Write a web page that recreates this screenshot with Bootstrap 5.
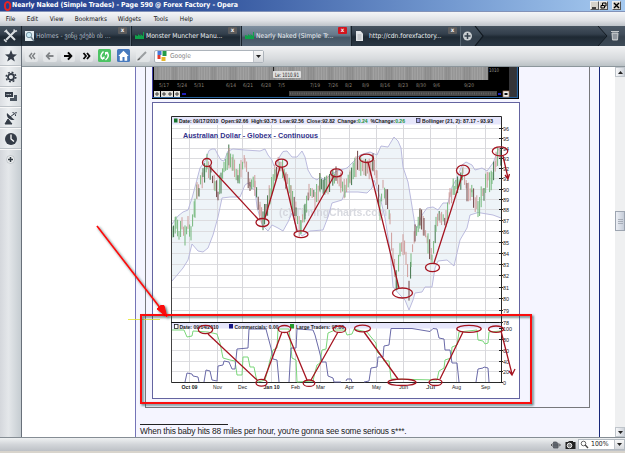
<!DOCTYPE html>
<html lang="en">
<head>
<meta charset="utf-8">
<title>Nearly Naked (Simple Trades) - Opera</title>
<link href="https://cdn.jsdelivr.net/npm/bootstrap@5.3.0/dist/css/bootstrap.min.css" rel="stylesheet">
<style>
html,body{width:625px;height:453px;overflow:hidden}
body{font-family:"DejaVu Sans Condensed","DejaVu Sans",sans-serif;font-size:6.8px;line-height:1;color:#222;background:#d8d4cc}
svg{display:block;flex:none}
.titlebar{height:12px;background:linear-gradient(90deg,#27408f,#3658a0 35%,#7399d0 72%,#a6caf0);color:#fff;font-weight:700;padding-left:3px;border-bottom:1px solid #8292b8}
.titlebar span{font-size:6.9px;letter-spacing:-.05px;white-space:nowrap}
.winbtn{width:9px;height:9px;background:#d6d2c9;border:1px solid #eee;border-right-color:#555;border-bottom-color:#555}
.menubar{height:14px;background:linear-gradient(#f4f5f7,#dfe1e5 60%,#bfc4ca);color:#111}
.menubar span{flex:none;white-space:nowrap;font-size:6.4px}
.tabstrip{height:20px;background:linear-gradient(#46535f,#333f4c 40%,#1e2933 55%,#2b3844);color:#eef2f5}
.cell{height:20px}
.page-tab{width:110px;border-left:1px solid #18222b;border-right:1px solid #566470;padding-left:2px}
.page-tab .caption{font-size:6.7px;white-space:nowrap;margin-left:1px;padding-top:1px}
.page-tab.current{background:linear-gradient(#8090a0,#66788a 45%,#455564 58%,#536474)}
.close-x{width:9px;height:7px;background:#5b5b5c;color:#eee;font-size:6px;font-weight:700;line-height:6px;text-align:center;position:absolute;right:3px;top:1px;border-radius:1px}
.current .close-x{background:#d3141d}
.panelbar{width:22px;background:linear-gradient(90deg,#d4d7dc,#e4e7ea 40%,#c5ccd1);border-right:1px solid #68707a}
.panelbtn{height:20.8px;background:linear-gradient(90deg,#dcdfe3,#edf0f2 40%,#d5dadd);border-bottom:1px solid #f8f8f8;box-shadow:inset 0 -1px #bcc2c7}
.toolbar-nav{height:21px;background:linear-gradient(#f1f2f3,#d7dadd 65%,#bbc2c6);border-bottom:1px solid #8c969c}
.search{width:110px;height:13px;background:#fff;border:1px solid #adb4bb;color:#858585;font-size:6.6px;border-radius:2px}
.dropbtn{width:10px;background:linear-gradient(#f7f7f7,#d5d8dc);border-left:1px solid #c0c4ca}
.gutter{width:113px;background:#fff}
.post{width:465px;background:#f5f5ff;border-left:1px solid #7474b7;border-right:1px solid #182779}
.shot{width:445px;height:341px;border:1px solid #77787c;border-top:0;padding-left:6px;margin-left:9px}
.chartbox{width:368px;height:297px;background:#fff;border:1px solid #6464a0;margin-top:3px}
.sig{margin:15.5px 0 0 4px;color:#222;font-family:"Liberation Sans",sans-serif;font-size:8.4px;letter-spacing:-.17px;white-space:nowrap}
.sig hr{width:88px;margin:0 0 2px;border-top:1px solid #222;opacity:1}
.scroller{width:10px;background:#eff0f1}
.scrollbtn{height:10px;background:linear-gradient(90deg,#f6f7f9,#ced3da);border:1px solid #bfc5cb}
.thumb{height:20px;background:linear-gradient(90deg,#eceff5,#c5ccd8);border:1px solid #9da5b1;margin-top:134px}
.statusbar{height:14px;background:linear-gradient(#eff1f2,#d2d5d9 50%,#bdc1c6);border-top:1px solid #858d94}
.zoombox{width:47px;height:11px;background:#fff;border:1px solid #b3bac1}
.overlay{left:0;top:0;pointer-events:none}
</style>
<script src="https://cdn.jsdelivr.net/npm/bootstrap@5.3.0/dist/js/bootstrap.bundle.min.js"></script>
</head>
<body class="d-flex flex-column position-relative">
<header class="titlebar d-flex align-items-center flex-shrink-0">
  <svg width="9" height="10" viewBox="0 0 9 10"><ellipse cx="4.6" cy="5" rx="2.7" ry="4" fill="none" stroke="#e52525" stroke-width="2"/></svg>
  <span>Nearly Naked (Simple Trades) - Page 590 @ Forex Factory - Opera</span>
  <div class="d-flex ms-auto me-1">
    <div class="winbtn"><svg width="7" height="7"><path d="M1 6H5" stroke="#000" stroke-width="1.4"/></svg></div>
    <div class="winbtn ms-0"><svg width="7" height="7"><path d="M2.5 3V1H6V4H5M1 3.5H4.5V6H1Z" fill="none" stroke="#000"/></svg></div>
    <div class="winbtn ms-1"><svg width="7" height="7"><path d="M1 1L6 6M6 1L1 6" stroke="#000" stroke-width="1.4"/></svg></div>
  </div>
</header>
<nav class="menubar flex-shrink-0 d-flex align-items-center ps-1">
  <span style="width:21px">&nbsp;File</span><span style="width:23px">&nbsp;Edit</span><span style="width:25px">&nbsp;View</span><span style="width:43px">&nbsp;Bookmarks</span><span style="width:36px">&nbsp;Widgets</span><span style="width:26px">&nbsp;Tools</span><span>&nbsp;Help</span>
</nav>
<div class="tabstrip flex-shrink-0 d-flex">
  <div class="cell"><svg width="21" height="20" viewBox="0 0 21 20"><path d="M6 5L15 14M15 5L6 14" stroke="#d9dee1" stroke-width="2"/><path d="M4.500 6L7 3.800M13.600 3.500L15.200 5.400L17 4.800M4 13.500L6.500 16" stroke="#d9dee1" stroke-width="1.500" fill="none"/></svg></div>
  <div class="cell page-tab d-flex align-items-center position-relative"><svg width="11" height="12" viewBox="0 0 11 12"><path d="M1 1H10V11H1Z" fill="#e1ebef"/><circle cx="5" cy="5" r="2.7" fill="#c6e7f2" stroke="#7894a3"/><path d="M7 7L10 11" stroke="#6b7e8a" stroke-width="1.4"/></svg><span class="caption" style="color:#aebac5">Holmes - ვინც ეძებს ის ...</span><i class="close-x fst-normal">x</i></div>
  <div class="cell page-tab d-flex align-items-center position-relative"><svg width="11" height="12" viewBox="0 0 11 12"><path d="M1 9V5L4 6V4L6.5 6V4L9 6V2H10V9Z" fill="#10a04a"/></svg><span class="caption">Monster Muncher Manu...</span><i class="close-x fst-normal">x</i></div>
  <div class="cell page-tab current d-flex align-items-center position-relative"><svg width="11" height="12" viewBox="0 0 11 12"><path d="M1 9V5L4 6V4L6.5 6V4L9 6V2H10V9Z" fill="#10a04a"/></svg><span class="caption">Nearly Naked (Simple Tr...</span><i class="close-x fst-normal">x</i></div>
  <div class="cell page-tab d-flex align-items-center position-relative"><svg width="11" height="12" viewBox="0 0 11 12"><path d="M2 1H6.5L9 3.5V11H2Z" fill="#e1e4e7"/><path d="M3.5 5H7.5M3.5 7H7.5M3.5 9H7.5" stroke="#a0a5ad" stroke-width=".8"/></svg><span class="caption ms-1">http://cdn.forexfactory...</span><i class="close-x fst-normal">x</i></div>
  <svg width="24" height="20" viewBox="0 0 24 20"><path d="M14 0L22 10L14 20H0V0Z" fill="#445260" opacity=".5"/><path d="M14 0L22 10L14 20" fill="none" stroke="#10181f" stroke-width="1.2"/><circle cx="6.5" cy="10" r="4.5" fill="#c9ced1"/><path d="M6.5 7V13M3.5 10H9.5" stroke="#35414d" stroke-width="1.5"/></svg>
  <svg class="ms-auto" width="28" height="20" viewBox="0 0 28 20"><path d="M1 0L10 10L1 20H28V0Z" fill="#54616e" opacity=".45"/><path d="M1 0L10 10L1 20" fill="none" stroke="#131b22"/><path d="M14 5.5H22M15 7H21L20.5 14H15.500Z" fill="#aeb4b8" stroke="#c5c9cb"/><path d="M17 8V13M19 8V13" stroke="#5b6670" stroke-width=".7"/></svg>
</div>
<div class="d-flex flex-shrink-0" style="height:391px">
  <aside class="panelbar flex-shrink-0">
    <div class="panelbtn d-flex align-items-center justify-content-center"><svg width="14" height="14" viewBox="0 0 14 14"><path d="M7 1L8.700 5.200L13 5.400L9.600 8.200L10.800 12.600L7 10L3.200 12.600L4.400 8.200L1 5.400L5.300 5.200Z" fill="#343c47"/></svg></div>
    <div class="panelbtn d-flex align-items-center justify-content-center"><svg width="14" height="14" viewBox="0 0 14 14"><circle cx="7" cy="7" r="4.800" fill="none" stroke="#343c47" stroke-width="1.500" stroke-dasharray="1.900 1.870"/><circle cx="7" cy="7" r="3" fill="none" stroke="#343c47" stroke-width="1.900"/></svg></div>
    <div class="panelbtn d-flex align-items-center justify-content-center"><svg width="14" height="14" viewBox="0 0 14 14"><path d="M1 2H9V7H4L3 8V7H1Z" fill="#343c47"/><path d="M10 5H13V11H6V8H10Z" fill="#4c5661"/><path d="M2.500 4.500H7.500" stroke="#c5cad0" stroke-dasharray="1.200 .5"/></svg></div>
    <div class="panelbtn d-flex align-items-center justify-content-center"><svg width="14" height="14" viewBox="0 0 14 14"><path d="M3 2C2 6 5 9.500 10.500 9Z" fill="#343c47"/><path d="M1 13L4 8L8 13ZM6 6L10 3" stroke="#343c47" fill="#343c47"/><path d="M8.500 1.500Q11.500 1.500 11.700 5" fill="none" stroke="#343c47"/><circle cx="12" cy="1.700" r=".8" fill="#343c47"/></svg></div>
    <div class="panelbtn d-flex align-items-center justify-content-center"><svg width="14" height="14" viewBox="0 0 14 14"><circle cx="7" cy="7" r="6" fill="#343c47"/><path d="M7 2.500V7L10 9.500" fill="none" stroke="#fff" stroke-width="1.300"/></svg></div>
    <div class="d-flex justify-content-center pt-1"><svg width="11" height="11" viewBox="0 0 11 11"><circle cx="5.500" cy="5.500" r="4" fill="#eef0f1" stroke="#b3b9be" stroke-width=".7"/><path d="M5.500 3V8M3 5.500H8" stroke="#333b43" stroke-width="1.500"/></svg></div>
  </aside>
  <main class="flex-grow-1">
    <div class="toolbar-nav d-flex align-items-center">
      <svg width="128" height="20" viewBox="22 46 128 20"><g fill="#e9ebed" opacity=".7"><rect x="25" y="49" width="13" height="13" rx="2"/><rect x="43" y="49" width="14" height="13" rx="2"/><rect x="61" y="49" width="14" height="13" rx="2"/><rect x="80" y="49" width="13" height="13" rx="2"/><rect x="136" y="49" width="14" height="13" rx="2"/></g><path d="M32 53L29.500 56L32 59M35 53L32.500 56L35 59" fill="none" stroke="#7d8083" stroke-width="1.400"/><path d="M46 56H53.500M49.800 52.600L46.700 56L49.800 59.400" fill="none" stroke="#818487" stroke-width="1.800"/><path d="M64 56H71M68 52.300L71.300 56L68 59.700" fill="none" stroke="#050505" stroke-width="2"/><path d="M83.500 53L86 56L83.500 59M87 53L89.500 56L87 59" fill="none" stroke="#080808" stroke-width="1.800"/><rect x="98" y="49" width="13" height="13" rx="1.500" fill="#4cc363"/><path d="M103.500 51.500Q98.500 56 103 59.500M105.500 60Q110.500 56 106.500 52" fill="none" stroke="#fff" stroke-width="1.500"/><path d="M100.500 59H104.500V56ZM108.500 52H105V55.500Z" fill="#fff"/><rect x="117" y="49" width="13" height="13" rx="1.500" fill="#4679bd"/><path d="M118.300 56L123.500 50.800L128.700 56H127.200V60.800H119.800V56Z" fill="#fff"/><rect x="122.500" y="57" width="2" height="4" fill="#4679bd"/><path d="M138 60L146 52" stroke="#9b9ea1" stroke-width="2"/><path d="M137.500 60L140 58.500" stroke="#555"/></svg>
      <div class="search d-flex align-items-center ms-1"><svg width="15" height="12" viewBox="0 0 14 12"><path d="M2 1H6V5H2Z" fill="#4779d9"/><path d="M2 5H5V9H2Z" fill="#de3a2f"/><path d="M7 1H11V6H7Z" fill="#239b4a"/><path d="M6 7H10V11H6Z" fill="#e6b72a"/></svg><span>Google</span><span class="dropbtn ms-auto h-100 d-flex align-items-center justify-content-center"><svg width="5" height="3"><path d="M0 0H5L2.500 3Z" fill="#222"/></svg></span></div>
    </div>
    <div class="d-flex" style="height:370px">
      <div class="gutter flex-shrink-0"></div>
      <section class="post flex-shrink-0">
        <div class="shot">
          <svg id="terminal" width="367" height="32" viewBox="153 67 367 32"></svg>
          <div class="chartbox"><svg id="chart" width="366" height="295" viewBox="153 103 366 295"></svg></div>
        </div>
        <div class="sig"><hr>When this baby hits 88 miles per hour, you're gonna see some serious s***.</div>
      </section>
      <div class="flex-grow-1 bg-white"></div>
      <div class="scroller flex-shrink-0 d-flex flex-column">
        <div class="scrollbtn d-flex align-items-center justify-content-center"><svg width="5" height="3"><path d="M0 3H5L2.500 0Z" fill="#222"/></svg></div>
        <div class="thumb d-flex align-items-center justify-content-center"><svg width="5" height="5"><path d="M0 .5H5M0 2.500H5M0 4.500H5" stroke="#929aa5" stroke-width=".7"/></svg></div>
        <div class="scrollbtn mt-auto d-flex align-items-center justify-content-center"><svg width="5" height="3"><path d="M0 0H5L2.500 3Z" fill="#222"/></svg></div>
      </div>
    </div>
  </main>
</div>
<footer class="statusbar flex-shrink-0 d-flex align-items-center justify-content-end">
  <svg width="27" height="12" viewBox="0 0 27 12"><path d="M0 6H9M2.500 3H5.500L7 4.500V9H2.500Z" fill="#60666e" stroke="#50565e" stroke-width=".8"/><path d="M1.500 4.500L0 6L1.500 7.500M8 4.500L9.500 6L8 7.500" fill="none" stroke="#444" stroke-width=".8"/><path d="M14.500 3H17L18 2H22V3H24.500V10H14.500Z" fill="#222"/><circle cx="18.500" cy="6.500" r="2.300" fill="#888" stroke="#eee"/></svg>
  <div class="zoombox d-flex align-items-center me-0"><svg width="12" height="9" viewBox="0 0 12 9"><circle cx="4.500" cy="3.500" r="2.300" fill="none" stroke="#666"/><path d="M6.200 5L9 8" stroke="#444" stroke-width="1.300"/></svg><span>100%</span><span class="dropbtn ms-auto h-100 d-flex align-items-center justify-content-center"><svg width="5" height="3"><path d="M0 0H5L2.500 3Z" fill="#222"/></svg></span></div>
</footer>
<svg class="overlay position-absolute" width="625" height="453" viewBox="0 0 625 453">
  <defs><filter id="shade" x="-10%" y="-10%" width="125%" height="125%"><feDropShadow dx="1.500" dy="1.500" stdDeviation="1.200" flood-color="#214f4f" flood-opacity=".8"/></filter></defs>
  <path d="M128 319.500H160" stroke="#e6e622" opacity=".8" stroke-width="1"/>
  <g filter="url(#shade)"><rect x="141" y="315" width="390" height="88" fill="none" stroke="#fb0707" stroke-width="2"/><path d="M97 226L161 309" stroke="#fa0707" stroke-width="1.700"/><path d="M167 317L157 309L160.500 305.500L164 305.500Z" fill="#fa0707" stroke="#fa0707"/></g>
</svg>
<script>
const txt=(x,y,s,fill,size,w,extra='')=>`<text x="${x}" y="${y}" fill="${fill}" font-size="${size}" ${w?`textLength="${w}" lengthAdjust="spacingAndGlyphs"`:''} ${extra}>${s}</text>`;
const poly=(pts,c,w=1,f='none')=>`<polyline points="${pts}" fill="${f}" stroke="${c}" stroke-width="${w}"/>`;
// trading terminal strip
let t='<rect x="153" y="67" width="367" height="32" fill="#000"/><rect x="155" y="67" width="334" height="13" fill="#959595"/>';
for(let x=156;x<489;x+=2.6)t+=`<path d="M${x} 67V80" stroke="${Math.round(x)%3?'#a8a8a8':'#888'}" stroke-width=".8"/>`;
[[160,'5/17'],[178,'5/24'],[195,'5/31'],[227,'6/14'],[244,'6/21'],[262,'6/28'],[279,'7/5'],[311,'7/19'],[329,'7/26'],[346,'8/2'],[363,'8/9'],[381,'8/16'],[399,'8/23'],[417,'8/30'],[434,'9/6'],[465,'9/20']].forEach(a=>t+=txt(a[0],86.5,a[1],'#8a8378',5,a[1].length>3?10:7));
t+=txt(490,71.5,'1010','#999',5,10)+'<rect x="510" y="67" width="8" height="31" fill="#353538"/><path d="M154 97.500H518.500V67" fill="none" stroke="#28629c" stroke-width="1.200"/><path d="M153.500 67V98" stroke="#4141a5"/><rect x="290" y="91" width="208" height="5" fill="#464646"/><path d="M291 93.500H498" stroke="#666" stroke-width="2" stroke-dasharray="1 1.300"/>';
[155,162,168,175].forEach(x=>t+=`<rect x="${x}" y="91" width="6" height="6" fill="#e3e3dc"/><path d="M${x+1} 94H${x+5}M${x+3} 92V96" stroke="#333" stroke-width=".9"/>`);
t+='<path d="M183 94H187M499 94H502" stroke="#2222bb" stroke-width="2"/><rect x="504" y="91" width="6" height="6" fill="#eee" stroke="#a77655" stroke-width=".7"/><path d="M505.500 94H508.500" stroke="#111" stroke-width="2"/><path d="M274.500 67V71" stroke="#222"/><rect x="274" y="71" width="28" height="7" rx="1" fill="#dedede"/>'+txt(276,77,'Le: 1010.91','#222',6,24);
document.getElementById('terminal').innerHTML=t;

// price chart
const upper='172,224 178,216 183,212 188,210 192,198 195,187 200,168 205,161 209,150.5 212,149 215,149 218,155 221,160 224,161 228,151 233,149 245,150 260,151 265,149 268,155 272,160 274,166 277,163 280,156 283,151.5 287,151 292,157 297,157 302,151 305,157 308,170 312,177 317,180 320,177 325,180 330,175 337,171 347,168 353,162 360,155 370,152 377,155 381,146 388,147 394,137 398,141 401,148 403,167 408,182 411,200 415,225 417,228 422,215 427,208 433,207 438,210 443,203 448,203 452,187 457,178 462,165 466,162 472,165 475,170 482,168 487,171 493,163 498,150 501,147';
const lower='172,281 178,274 183,268 188,260 192,244 198,251 203,252 208,248 213,235 218,217 222,198 230,197 240,197 245,185 248,183 252,188 255,190 257,207 262,225 268,231 272,225 278,228 283,231 288,222 292,213 297,230 302,236 310,231 323,230 328,217 332,203 342,200 345,192 358,192 367,193 372,188 374,180 380,197 385,218 390,250 393,287 400,295 405,300 409,310 413,300 415,293 422,292 425,287 432,287 435,268 438,261 447,260 454,266 460,240 467,228 470,215 478,212.5 493,215 501,218';
const price=[[172,236],[176,220],[179,232],[182,220],[185,236],[188,222],[191,232],[195,205],[197,187],[199,190],[203,173],[207,165],[211,172],[215,188],[218,196],[221,180],[224,164],[229,157],[233,163],[238,178],[241,165],[245,162],[250,184],[255,185],[260,210],[263,219],[266,211],[270,193],[275,172],[281,163],[286,178],[291,193],[296,210],[301,230],[305,210],[309,190],[315,198],[320,185],[328,182],[336,174],[341,182],[345,192],[350,180],[356,163],[366,166],[373,166],[377,178],[380,210],[383,188],[386,195],[390,215],[393,260],[397,284],[400,250],[403,242],[406,258],[409,288],[411,262],[415,235],[420,218],[424,227],[428,240],[432,262],[436,228],[440,215],[446,222],[450,195],[456,185],[463,174],[467,190],[472,192],[478,209],[484,193],[488,178],[492,180],[496,159],[501,154]];
const months=[[189,'Oct 09'],[217,'Nov'],[242,'Dec'],[271,'Jan 10'],[295,'Feb'],[320,'Mar'],[349,'Apr'],[376,'May'],[403,'Jun'],[430,'Jul'],[456,'Aug'],[485,'Sep']];
const ys=[128.5,138.5,148.5,158.5,168.5,178.5,189.5,199.5,209.5,220.5,231.5,242.5,253.5,264.5,275.5,287.5,298.5,310.5];
let c='<g font-family="Liberation Sans,sans-serif">';
c+=`<polygon points="${upper} ${lower.split(' ').reverse().join(' ')}" fill="#eef4f8"/>`;
ys.forEach((y,i)=>{c+=`<path d="M172 ${y}H501" stroke="#dcdcdf"/>`+`<path d="M499 ${y}H503" stroke="#222"/>`+txt(503,y+2,String(96-i),'#222',6,6)});
[339.5,350.5,361.5,371.5].forEach(y=>c+=`<path d="M172 ${y}H501" stroke="#dedee1"/>`);
months.forEach(m=>c+=`<path d="M${m[0]+.5} 125V382" stroke="#d8d8dc"/>`);
c+=txt(279,216,'(c) TimingCharts.com','#cfd1d9',11,108,'font-weight="bold" opacity=".8"');
c+=poly(upper,'#b4b3da',.9)+poly(lower,'#b4b3da',.9);
let seed=7;const rnd=()=>(seed=(seed*16807)%2147483647)/2147483647;
for(let i=0;i<price.length-1;i++){const[a,b]=[price[i],price[i+1]];for(let x=a[0];x<b[0];x+=1.6){
 const y=a[1]+(b[1]-a[1])*(x-a[0])/(b[0]-a[0])+(rnd()-.5)*8,up=(b[1]<a[1])!==(rnd()<.25),h=3.5+rnd()*7;
 c+=`<path d="M${x.toFixed(1)} ${(y-h).toFixed(1)}V${(y+h).toFixed(1)}" stroke="${up?(rnd()<.75?'#75b87c':'#41744a'):(rnd()<.7?'#cf9c9a':'#704444')}" stroke-width="1"/>`}}
c+='<rect x="172" y="117" width="329" height="7.500" fill="#e6e6fb"/><path d="M171.500 382.500V116.500H501.500V382.500Z" fill="none" stroke="#292929"/><path d="M171.500 200V382" stroke="#444"/>';
c+='<rect x="174" y="118.500" width="3.500" height="4" fill="#15732a"/><rect x="416.500" y="118.500" width="3.500" height="4" fill="#aaaaf0" stroke="#223" stroke-width=".7"/>';
const B='font-weight="bold"';
c+=txt(179,122.500,'Date: 09/17/2010&#160; Open:92.66&#160; High:93.75&#160; Low:92.56&#160; Close:92.82&#160; Change:<tspan fill="#16913a">0.24</tspan>&#160; %Change:<tspan fill="#16913a">0.26</tspan>','#161616',5.500,226,B)+txt(422,122.500,'Bollinger (21, 2): 87.17 - 93.93','#161616',5.500,71,B);
c+=txt(183,138,'Australian Dollar - Globex - Continuous','#31318b',7.500,135,B);
// open interest panel
c+='<rect x="172" y="322" width="329" height="6.500" fill="#e6e6fb"/><path d="M171 322.500H502" stroke="#111"/>';
[['78',322.5],['100',328.5],['80',339.5],['60',350.5],['40',361.5],['20',371.5],['0',382.5]].forEach(a=>c+=`<path d="M499 ${a[1]}H503" stroke="#222"/>`+txt(503,a[1]+2,a[0],'#222',6,a[0].length*3));
const green='172,330 184,330 187,337 192,336 193,331 208,332 217,334 220,343 223,358 230,360 235,361 237,375 242,375 243,357 248,357 250,367 254,367 256,377 258,382 265,380 267,373 270,360 273,350 277,348 278,329 289,329 292,358 296,360 297,382 313,381 315,372 317,365 320,363 322,350 326,349 328,333 335,330 345,330 347,335 352,334 354,329 358,330 367,332 371,337 376,343 377,352 383,358 384,361 389,361 391,379 437,380 439,371 444,368 445,360 451,358 452,347 457,345 459,332 477,330 478,340 483,341 485,344 488,343 489,332 501,331';
c+=poly(green,'#7bd77b',1);
['185,382 187,373 192,374 193,376 198,377 199,382','204,382 206,370 210,371 212,380 217,381 218,366 223,365 224,361 229,362 232,369 235,369 237,349 248,348 249,329 266,329 267,333 271,348 273,359 277,360 279,382','289,382 291,348 296,348 297,329 313,330 315,335 319,350 322,362 326,362 328,376 333,378 334,382 341,382','346,381 347,379 351,379 352,382','364,382 369,381 371,368 377,367 378,357 383,357 384,346 389,345 391,328.500 412,328.500 430,331.500 433,328.500 437,329 439,338 444,339 445,350 450,350 452,363 457,363 459,382','476,382 478,369 483,368 484,367 488,368 489,382'].forEach(p=>c+=poly(p,'#6a6aa8',1));
c+='<rect x="174.500" y="324.500" width="3.500" height="4" fill="#fff" stroke="#222" stroke-width=".8"/><rect x="229" y="324" width="4" height="4.500" fill="#171785"/><rect x="290" y="324" width="4" height="4.500" fill="#249c2e"/>'+txt(179.500,328.500,'Date: 09/14/2010','#222',5.500,39,B)+txt(234.500,328.500,'Commercials: 0.00','#222',5.500,44,B)+txt(296,328.500,'Large Traders: 97.06','#222',5.500,48,B);
months.forEach((m,i)=>{const bold=i===0||i===3,w=bold?16:9;c+=txt(m[0]+.5-w/2,389,m[1],'#222',5.800,w,bold?B:'')});
// hand-marked swings
const ell=a=>`<ellipse cx="${a[0]}" cy="${a[1]}" rx="${a[2]}" ry="${a[3]}" fill="none"/>`;
c+='<g stroke="#a51420" stroke-width="1.300" fill="none">';
[[207,162.500,4.500,4],[262.500,222.500,6.500,4],[281.500,163.200,6,4],[301,234.200,7,3.400],[336.500,172.800,6,4],[366.500,158.300,7,4.200],[402.500,293,10,5],[432.500,267.500,7,4.200],[463,170.500,6.500,5.300],[500,151.300,7.700,4.500],[205.500,329.500,7.200,4.200],[261.500,382.800,5.500,3.400],[284.500,329,6.200,3.500],[309,383.200,5.800,3.200],[339.500,329.200,6.200,3.200],[362.500,328.500,8,3.300],[402,382.300,14,3.200],[435.500,382.300,6.500,3.200],[469,328.800,12.200,3.500],[496,329.200,7.500,3.200]].forEach(a=>c+=ell(a));
c+='<path d="M209 166L258 219M265 218L280 167M282 167L297 231M303 231L334 176M368 162L399 288M434 263L462 176M503 156L508 178M505 175L508 179L509.500 174"/><path d="M208 334L257 380M264 380L282 332M287 332L307 380M311 380L338 332M364 332L398 379M440 379L463 332M501 331L512 374M509 371L512 375L515 369"/></g></g>';
document.getElementById('chart').innerHTML=c;
</script>
</body>
</html>
